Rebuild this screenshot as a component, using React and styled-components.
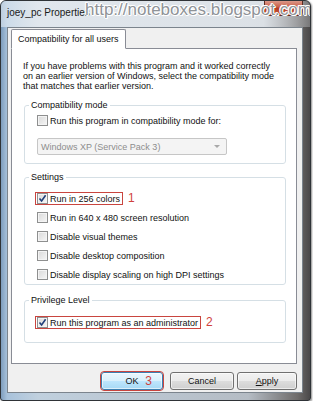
import React from "react";
import styled, { createGlobalStyle } from "styled-components";

const settings = [
  { label: "Run in 256 colors", checked: true, note: "1" },
  { label: "Run in 640 x 480 screen resolution" },
  { label: "Disable visual themes" },
  { label: "Disable desktop composition" },
  { label: "Disable display scaling on high DPI settings" },
];

const CheckBox = ({ checked }) => (
  <Box>
    {checked && (
      <svg width="9" height="9" viewBox="0 0 9 9">
        <path d="M1.5 4.5 L3.6 7 L7.6 1.2" fill="none" stroke="#213f7a" strokeWidth="1.6" />
      </svg>
    )}
  </Box>
);

const Option = ({ label, checked, note }) => {
  const body = (
    <>
      <CheckBox checked={checked} />
      <span>{label}</span>
    </>
  );
  return (
    <Row>
      {note ? <Marked>{body}</Marked> : body}
      {note && <Note>{note}</Note>}
    </Row>
  );
};

const App = () => {
  return (
    <>
      <GlobalStyle />
      <Window>
        <TitleBar>
          <Title>joey_pc Properties</Title>
          <CloseButton>✕</CloseButton>
          <Watermark>http://noteboxes.blogspot.com</Watermark>
        </TitleBar>
        <Client>
          <Tabs>
            <Tab>Compatibility for all users</Tab>
          </Tabs>
          <Panel>
            <Intro>
              If you have problems with this program and it worked correctly
              <br />
              on an earlier version of Windows, select the compatibility mode
              <br />
              that matches that earlier version.
            </Intro>

            <Group $top={9} $padTop={4} $padBottom={8}>
              <Legend>Compatibility mode</Legend>
              <Option label="Run this program in compatibility mode for:" />
              <Select>
                <span>Windows XP (Service Pack 3)</span>
                <Arrow />
              </Select>
            </Group>

            <Group $top={8} $padTop={10} $padBottom={3}>
              <Legend>Settings</Legend>
              <Rows>
                {settings.map((s) => (
                  <Option key={s.label} {...s} />
                ))}
              </Rows>
            </Group>

            <Group $top={10} $padTop={11} $padBottom={13}>
              <Legend>Privilege Level</Legend>
              <Option label="Run this program as an administrator" checked note="2" />
            </Group>
          </Panel>
          <Buttons>
            <Button $primary $w={62}>
              OK
              <ButtonNote>3</ButtonNote>
            </Button>
            <Button $w={64} $ml={7}>Cancel</Button>
            <Button $w={60} $ml={3}>
              <u>A</u>pply
            </Button>
          </Buttons>
        </Client>
      </Window>
    </>
  );
};

export default App;

const GlobalStyle = createGlobalStyle`
  html, body {
    margin: 0;
    padding: 0;
    background: #fff;
  }
  body {
    font-family: "Liberation Sans", Arial, sans-serif;
    color: #111;
  }
`;

const Window = styled.div`
  position: relative;
  width: 311px;
  height: 401px;
  box-sizing: border-box;
  border: 1px solid #2f3337;
  border-radius: 6px 6px 3px 3px;
  background: linear-gradient(
    to right,
    #7e9dbd 0%,
    #a8c2db 2%,
    #c0d0de 12%,
    #b5bcc4 80%,
    #6e6b6a 96%,
    #4a4849 100%
  );
  box-shadow: 1px 1px 2px rgba(0, 0, 0, 0.45);
  display: flex;
  flex-direction: column;
  overflow: hidden;
`;

const TitleBar = styled.div`
  position: relative;
  height: 26px;
  flex: none;
  display: flex;
  align-items: flex-start;
  padding-left: 6px;
  background: linear-gradient(
    to right,
    rgba(214, 226, 237, 0.7) 0%,
    rgba(226, 232, 238, 0.95) 12%,
    rgba(222, 227, 232, 0.95) 85%,
    rgba(150, 150, 152, 0.6) 100%
  );
`;

const Title = styled.div`
  font-size: 10px;
  line-height: 24px;
  color: #1a1a1a;
  white-space: nowrap;
`;

const CloseButton = styled.div`
  margin-left: auto;
  margin-right: 7px;
  margin-top: -1px;
  width: 39px;
  height: 16px;
  box-sizing: border-box;
  border: 1px solid #5a2a22;
  border-top: none;
  border-radius: 0 0 4px 4px;
  background: linear-gradient(#dfa193 0%, #c9624c 45%, #b43a22 55%, #c85e42 100%);
  color: #fff;
  font-size: 10px;
  line-height: 15px;
  text-align: center;
`;

const Watermark = styled.div`
  position: absolute;
  left: 84px;
  top: -1px;
  font-family: "Liberation Sans", Arial, sans-serif;
  font-size: 17px;
  line-height: 20px;
  color: #8f9398;
  white-space: nowrap;
  text-shadow: 1px 0 0 #fff, -1px 0 0 #fff, 0 1px 0 #fff, 0 -1px 0 #fff,
    1px 1px 0 #fff, -1px -1px 0 #fff;
`;

const Client = styled.div`
  flex: 1;
  margin: 0 7px 7px 6px;
  display: flex;
  flex-direction: column;
  padding: 1px 5px 2px 3px;
  background: #f0f0f0;
  border: 1px solid #7b848d;
`;

const Tabs = styled.div`
  display: flex;
  position: relative;
  z-index: 1;
  margin-bottom: -1px;
`;

const Tab = styled.div`
  height: 18px;
  padding: 0 6px;
  font-size: 9px;
  line-height: 18px;
  background: #fff;
  border: 1px solid #898c95;
  border-bottom: 1px solid #fff;
  border-radius: 2px 2px 0 0;
`;

const Panel = styled.div`
  flex: 1;
  background: #fff;
  border: 1px solid #898c95;
  padding: 12px 10px 0 11px;
`;

const Intro = styled.p`
  margin: 0;
  font-size: 9px;
  line-height: 10px;
  white-space: nowrap;
`;

const Group = styled.fieldset`
  margin: ${(p) => p.$top}px 0 0 1px;
  padding: ${(p) => p.$padTop}px 10px ${(p) => p.$padBottom}px 12px;
  min-width: 0;
  border: 1px solid #d5dfe5;
  border-radius: 3px;
`;

const Legend = styled.legend`
  margin-left: -8px;
  padding: 0 2px;
  font-size: 9px;
  line-height: 10px;
`;

const Rows = styled.div`
  display: flex;
  flex-direction: column;
  gap: 6px;
`;

const Row = styled.div`
  display: flex;
  align-items: center;
  height: 13px;
  font-size: 9px;
  white-space: nowrap;
`;

const Marked = styled.span`
  display: flex;
  align-items: center;
  height: 13px;
  box-sizing: border-box;
  margin-left: -2px;
  padding: 0 2px 0 1px;
  border: 1px solid #c9453f;
`;

const Note = styled.span`
  margin-left: 5px;
  color: #d0413d;
  font-size: 12px;
  line-height: 13px;
`;

const Box = styled.span`
  flex: none;
  width: 11px;
  height: 11px;
  box-sizing: border-box;
  margin-right: 2px;
  display: flex;
  align-items: center;
  justify-content: center;
  border: 1px solid #8e8f8f;
  background: linear-gradient(135deg, #d9d9d9, #f6f6f6);
  box-shadow: inset 0 0 0 1px #f4f4f4;
`;

const Select = styled.div`
  margin-top: 11px;
  width: 190px;
  height: 17px;
  box-sizing: border-box;
  display: flex;
  align-items: center;
  justify-content: space-between;
  padding: 0 6px 0 3px;
  border: 1px solid #c6c6c6;
  border-radius: 2px;
  background: #f4f4f4;
  color: #8d8d8d;
  font-size: 9px;
`;

const Arrow = styled.span`
  width: 0;
  height: 0;
  border-left: 3px solid transparent;
  border-right: 3px solid transparent;
  border-top: 3px solid #a8a8a8;
`;

const Buttons = styled.div`
  display: flex;
  justify-content: flex-end;
  margin-top: 8px;
`;

const Button = styled.div`
  position: relative;
  width: ${(p) => p.$w}px;
  margin-left: ${(p) => p.$ml || 0}px;
  height: 18px;
  box-sizing: border-box;
  display: flex;
  align-items: center;
  justify-content: center;
  font-size: 9px;
  border-radius: 3px;
  border: 1px solid ${(p) => (p.$primary ? "#3c7fb1" : "#707070")};
  background: ${(p) =>
    p.$primary
      ? "linear-gradient(#eaf6fd 0%, #d9f0fc 50%, #bee6fd 50%, #a7d9f5 100%)"
      : "linear-gradient(#f2f2f2 0%, #ebebeb 50%, #dddddd 50%, #cfcfcf 100%)"};
  box-shadow: inset 0 0 0 1px rgba(255, 255, 255, 0.6);
  outline: ${(p) => (p.$primary ? "1px solid #c9453f" : "none")};
  outline-offset: 0;
`;

const ButtonNote = styled.span`
  position: absolute;
  right: 10px;
  top: 1px;
  color: #d0413d;
  font-size: 12px;
  line-height: 14px;
`;
